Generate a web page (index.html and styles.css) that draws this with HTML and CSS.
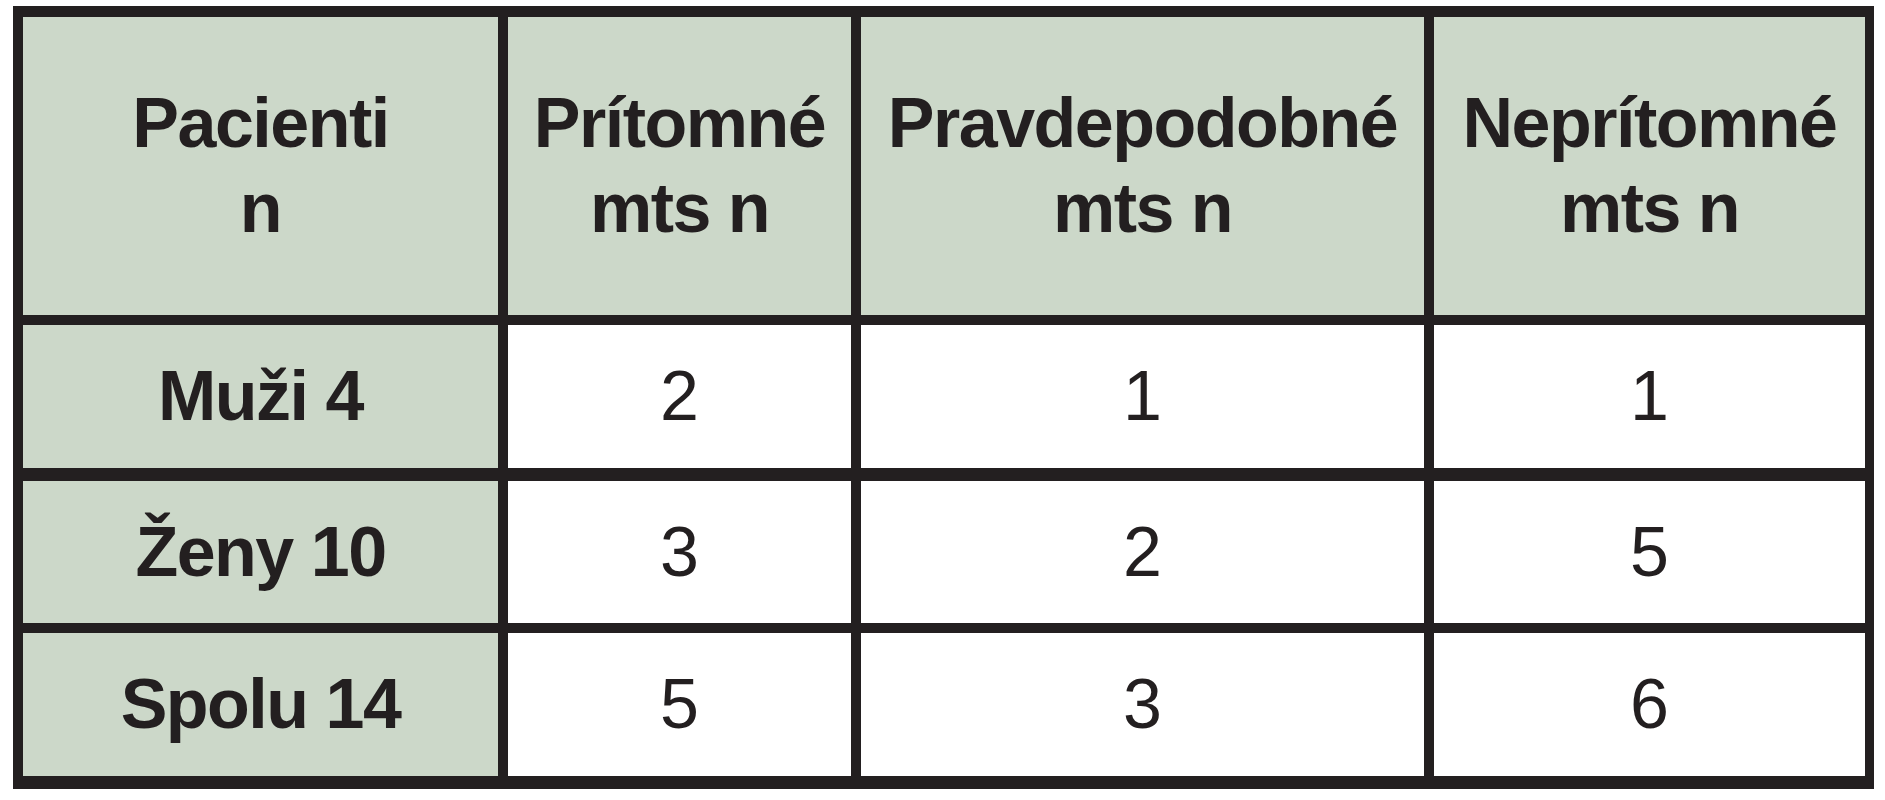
FILE: index.html
```html
<!DOCTYPE html>
<html lang="sk">
<head>
<meta charset="utf-8">
<title>Pacienti</title>
<link rel="stylesheet" href="styles.css">
</head>
<body>
<div class="tbl">
  <div class="cell head c1 r-h">Pacienti<br>n</div>
  <div class="cell head c2 r-h">Prítomné<br>mts n</div>
  <div class="cell head c3 r-h">Pravdepodobné<br>mts n</div>
  <div class="cell head c4 r-h">Neprítomné<br>mts n</div>

  <div class="cell head c1 r-a">Muži 4</div>
  <div class="cell val c2 r-a">2</div>
  <div class="cell val c3 r-a">1</div>
  <div class="cell val c4 r-a">1</div>

  <div class="cell head c1 r-b">Ženy 10</div>
  <div class="cell val c2 r-b">3</div>
  <div class="cell val c3 r-b">2</div>
  <div class="cell val c4 r-b">5</div>

  <div class="cell head c1 r-a">Spolu 14</div>
  <div class="cell val c2 r-a">5</div>
  <div class="cell val c3 r-a">3</div>
  <div class="cell val c4 r-a">6</div>
</div>
</body>
</html>
```
FILE: styles.css
```css
html, body {
  margin: 0;
  padding: 0;
  background: #ffffff;
}

body {
  font-family: "Liberation Sans", Arial, sans-serif;
  color: #231f20;
}

.tbl {
  display: grid;
  grid-template-columns: 485px 353px 573px 431px;
  width: fit-content;
  margin: 6px 0 0 13px;
  border-top: 11px solid #231f20;
  border-left: 10px solid #231f20;
  border-right: 9px solid #231f20;
}

.cell {
  box-sizing: border-box;
  display: flex;
  flex-direction: column;
  align-items: center;
  justify-content: center;
  text-align: center;
  font-size: 70px;
  line-height: 85px;
  border-bottom: 10px solid #231f20;
  border-right: 10px solid #231f20;
}

.c4 {
  border-right: 0;
}

.head {
  background: #ccd8c9;
  font-weight: bold;
  letter-spacing: -1.5px;
}

.val {
  background: #ffffff;
  font-weight: normal;
}

.r-h {
  height: 308px;
}

.r-a {
  height: 156px;
  border-bottom-width: 13px;
}

.r-b {
  height: 152px;
}
```
